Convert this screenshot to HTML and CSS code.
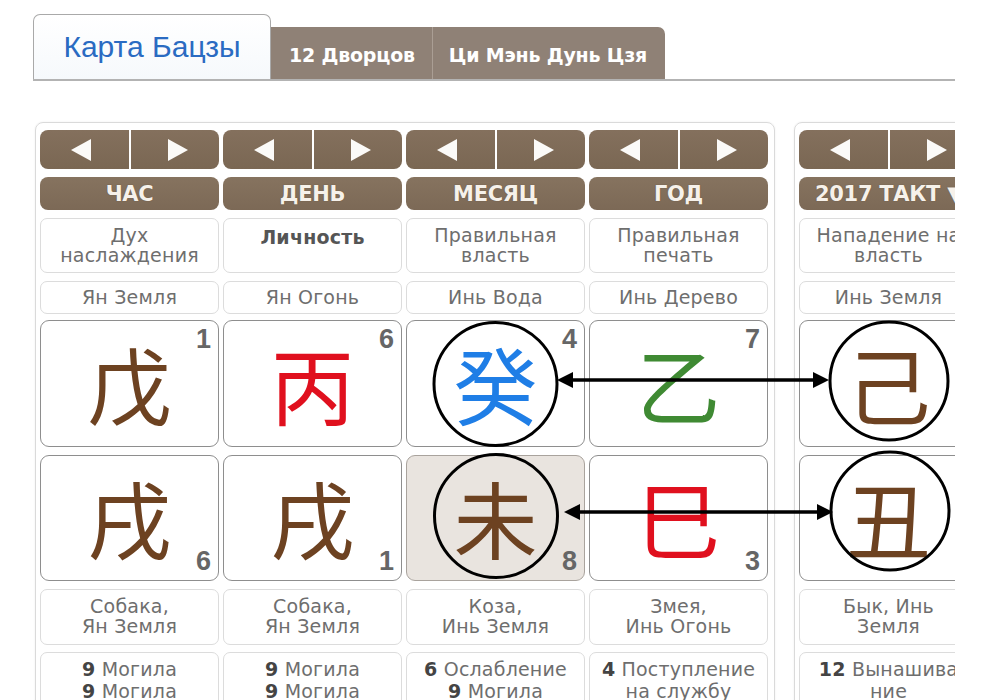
FILE: index.html
```html
<!DOCTYPE html>
<html lang="ru">
<head>
<meta charset="utf-8">
<title>Карта Бацзы</title>
<link rel="stylesheet" href="styles.css">
</head>
<body>
<div class="page">
  <div class="tabs">
    <div class="tab tab-active">Карта Бацзы</div>
    <div class="tab-group">
      <div class="tab tab-plain">12 Дворцов</div>
      <div class="tab tab-plain">Ци Мэнь Дунь Цзя</div>
    </div>
  </div>

  <div class="charts">
    <div class="panel">
      <div class="col">
        <div class="nav"><span class="btn"><i class="tri tri-left"></i></span><span class="btn"><i class="tri tri-right"></i></span></div>
        <div class="head">ЧАС</div>
        <div class="box box-god">Дух<br>наслаждения</div>
        <div class="box box-elem">Ян Земля</div>
        <div class="cell cell-stem"><span class="char c-earth">戊</span><span class="num num-top">1</span></div>
        <div class="cell cell-branch"><span class="char c-earth">戌</span><span class="num num-bottom">6</span></div>
        <div class="box box-animal">Собака,<br>Ян Земля</div>
        <div class="box box-stage"><b>9</b> Могила<br><b>9</b> Могила</div>
      </div>
      <div class="col">
        <div class="nav"><span class="btn"><i class="tri tri-left"></i></span><span class="btn"><i class="tri tri-right"></i></span></div>
        <div class="head">ДЕНЬ</div>
        <div class="box box-god box-self">Личность</div>
        <div class="box box-elem">Ян Огонь</div>
        <div class="cell cell-stem"><span class="char c-fire">丙</span><span class="num num-top">6</span></div>
        <div class="cell cell-branch"><span class="char c-earth">戌</span><span class="num num-bottom">1</span></div>
        <div class="box box-animal">Собака,<br>Ян Земля</div>
        <div class="box box-stage"><b>9</b> Могила<br><b>9</b> Могила</div>
      </div>
      <div class="col">
        <div class="nav"><span class="btn"><i class="tri tri-left"></i></span><span class="btn"><i class="tri tri-right"></i></span></div>
        <div class="head">МЕСЯЦ</div>
        <div class="box box-god">Правильная<br>власть</div>
        <div class="box box-elem">Инь Вода</div>
        <div class="cell cell-stem"><span class="char c-water">癸</span><span class="num num-top">4</span></div>
        <div class="cell cell-branch cell-marked"><span class="char c-earth">未</span><span class="num num-bottom">8</span></div>
        <div class="box box-animal">Коза,<br>Инь Земля</div>
        <div class="box box-stage"><b>6</b> Ослабление<br><b>9</b> Могила</div>
      </div>
      <div class="col">
        <div class="nav"><span class="btn"><i class="tri tri-left"></i></span><span class="btn"><i class="tri tri-right"></i></span></div>
        <div class="head">ГОД</div>
        <div class="box box-god">Правильная<br>печать</div>
        <div class="box box-elem">Инь Дерево</div>
        <div class="cell cell-stem"><span class="char c-wood">乙</span><span class="num num-top">7</span></div>
        <div class="cell cell-branch"><span class="char c-fire">巳</span><span class="num num-bottom">3</span></div>
        <div class="box box-animal">Змея,<br>Инь Огонь</div>
        <div class="box box-stage"><b>4</b> Поступление<br>на службу</div>
      </div>
    </div>

    <div class="panel">
      <div class="col">
        <div class="nav"><span class="btn"><i class="tri tri-left"></i></span><span class="btn"><i class="tri tri-right"></i></span></div>
        <div class="head head-left">2017 ТАКТ ▼</div>
        <div class="box box-god">Нападение на<br>власть</div>
        <div class="box box-elem">Инь Земля</div>
        <div class="cell cell-stem"><span class="char c-earth">己</span><span class="num num-top">9</span></div>
        <div class="cell cell-branch"><span class="char c-earth">丑</span><span class="num num-bottom">2</span></div>
        <div class="box box-animal">Бык, Инь<br>Земля</div>
        <div class="box box-stage"><b>12</b> Вынашива<br>ние</div>
      </div>
    </div>
  </div>

  <svg class="overlay" width="1000" height="700" viewBox="0 0 1000 700">
    <g fill="none" stroke="#000" stroke-width="3">
      <circle cx="495.5" cy="384" r="61.5"/>
      <circle cx="496" cy="516" r="61.5"/>
      <circle cx="889" cy="381" r="59"/>
      <circle cx="890" cy="511" r="59"/>
    </g>
    <g fill="none" stroke="#000" stroke-width="3.5">
      <line x1="570" y1="380" x2="816" y2="380"/>
      <line x1="577" y1="512" x2="820" y2="512"/>
    </g>
    <g fill="#000">
      <polygon points="557,380 573,372 573,388"/>
      <polygon points="829,380 813,372 813,388"/>
      <polygon points="564,512 580,504 580,520"/>
      <polygon points="833,512 817,504 817,520"/>
    </g>
  </svg>
</div>
</body>
</html>
```

FILE: styles.css
```css
html, body {
  margin: 0;
  padding: 0;
  background: #fff;
}

body {
  font-family: "DejaVu Sans", Verdana, sans-serif;
  overflow: hidden;
}

.page {
  position: relative;
  width: 955px;
  height: 700px;
  overflow: hidden;
  padding-left: 33px;
  box-sizing: border-box;
}

/* ---------- tabs ---------- */
.tabs {
  display: flex;
  align-items: flex-end;
  margin-top: 14px;
  border-bottom: 2px solid #b3b3b3;
}

.tab-active {
  width: 238px;
  height: 65px;
  box-sizing: border-box;
  border: 1px solid #a9a9a9;
  border-bottom: none;
  border-radius: 7px 7px 0 0;
  background: linear-gradient(#ffffff, #f6f9fc);
  color: #2a6bc2;
  font-family: "Liberation Sans", Arial, sans-serif;
  font-size: 30px;
  text-align: center;
  line-height: 64px;
}

.tab-group {
  display: flex;
  height: 52px;
  background: #8f8176;
  border-radius: 0 7px 0 0;
}

.tab-plain {
  color: #fff;
  font-family: "DejaVu Sans", Verdana, sans-serif;
  font-weight: bold;
  font-size: 19px;
  letter-spacing: -0.2px;
  line-height: 56px;
  padding: 0 17px 0 18px;
}

.tab-plain + .tab-plain {
  border-left: 1px solid #aa9e94;
  padding: 0 18px 0 16px;
}

/* ---------- charts ---------- */
.charts {
  display: flex;
  gap: 19px;
  margin-top: 41px;
  margin-left: 2px;
}

.panel {
  flex: none;
  display: flex;
  gap: 4px;
  padding: 7px 6px 0 4px;
  border: 1px solid #dadada;
  border-radius: 8px;
  box-shadow: 0 0 2px rgba(0, 0, 0, 0.08);
  height: 640px;
}

.col {
  width: 179px;
  display: flex;
  flex-direction: column;
}

/* nav buttons */
.nav {
  display: flex;
  gap: 2px;
  height: 39px;
  border-radius: 8px;
  overflow: hidden;
}

.btn {
  flex: 1;
  display: flex;
  align-items: center;
  justify-content: center;
  background: linear-gradient(#84705d, #7a6753);
}

.tri {
  display: block;
  width: 0;
  height: 0;
  border-top: 11px solid transparent;
  border-bottom: 11px solid transparent;
}

.tri-left {
  border-right: 20px solid #fbfaf8;
  margin-left: -6px;
}

.tri-right {
  border-left: 20px solid #fbfaf8;
  margin-left: 6px;
}

/* column header */
.head {
  margin-top: 8px;
  height: 33px;
  border-radius: 8px;
  background: linear-gradient(#86735f, #7c6956);
  color: #f6f1ea;
  font-weight: bold;
  font-size: 21px;
  letter-spacing: -0.3px;
  line-height: 34px;
  text-align: center;
  text-shadow: 0 0 1px rgba(60, 40, 20, 0.5);
  white-space: nowrap;
}

.head-left {
  text-align: left;
  padding-left: 16px;
}

/* text boxes */
.box {
  box-sizing: border-box;
  border: 1px solid #dcdcdc;
  border-radius: 7px;
  color: #6e6e6e;
  font-size: 19px;
  letter-spacing: 0.2px;
  line-height: 20px;
  text-align: center;
  white-space: nowrap;
  overflow: hidden;
}

.box-god {
  margin-top: 8px;
  height: 55px;
  padding-top: 6px;
}

.box-self {
  color: #555;
  font-weight: bold;
  font-size: 19px;
  letter-spacing: 0.2px;
  padding-top: 8px;
}

.box-elem {
  margin-top: 8px;
  height: 33px;
  line-height: 31px;
}

.box-animal {
  margin-top: 8px;
  height: 56px;
  padding-top: 6px;
}

.box-stage {
  margin-top: 7px;
  height: 80px;
  padding-top: 5px;
  line-height: 22px;
}

.box-stage b {
  color: #444;
  font-weight: bold;
}

/* pillar cells */
.cell {
  position: relative;
  box-sizing: border-box;
  border: 1.5px solid #8e8e8e;
  border-radius: 9px;
  display: flex;
  align-items: center;
  justify-content: center;
  background: #fff;
}

.cell-stem {
  margin-top: 6px;
  height: 127px;
}

.cell-branch {
  margin-top: 8px;
  height: 126px;
}

.cell-marked {
  background: #e9e4df;
  border-color: #a9a39d;
}

.char {
  font-family: "Noto Sans CJK SC", "Noto Sans CJK JP", sans-serif;
  font-size: 84px;
  line-height: 1;
  margin-top: -2px;
}

.c-earth { color: #6d4221; }
.c-fire  { color: #e0101e; }
.c-water { color: #1f7ee6; }
.c-wood  { color: #3f8a33; }

.num {
  position: absolute;
  right: 7px;
  font-family: "Liberation Sans Narrow", "Liberation Sans", Arial, sans-serif;
  font-weight: bold;
  font-size: 27px;
  line-height: 1;
  color: #666;
}

.num-top { top: 5px; }
.num-bottom { bottom: 5px; }

/* annotation overlay */
.overlay {
  position: absolute;
  left: 0;
  top: 0;
  pointer-events: none;
}
```
